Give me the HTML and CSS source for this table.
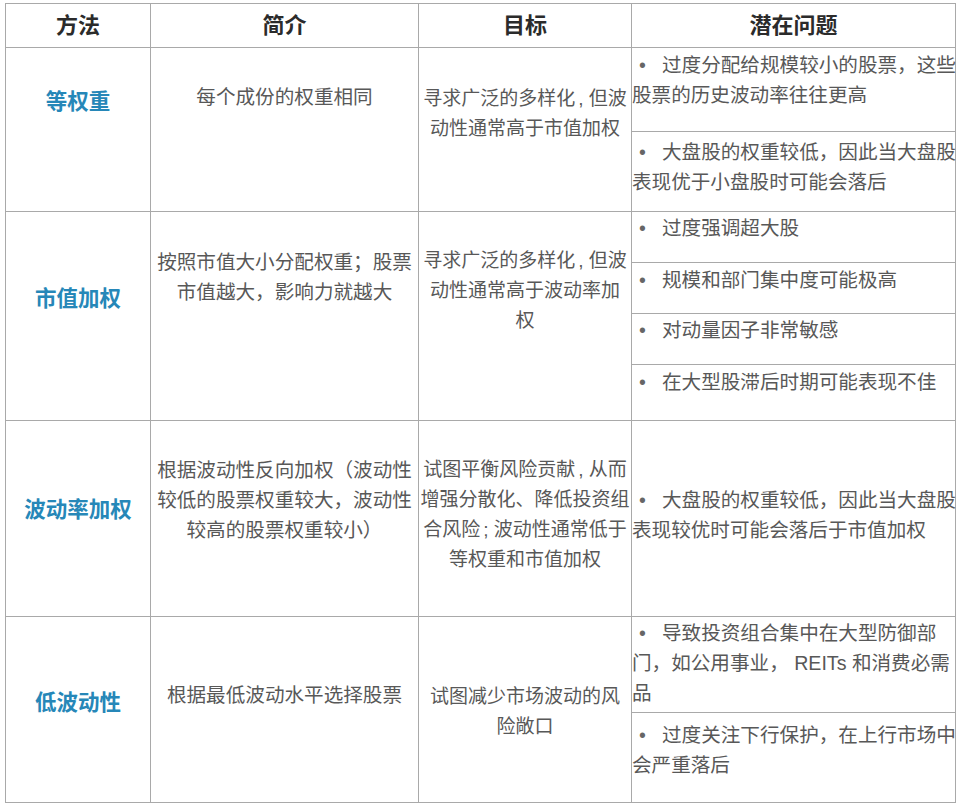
FILE: index.html
```html
<!DOCTYPE html>
<html lang="zh-CN">
<head>
<meta charset="utf-8">
<title>加权方法比较</title>
<link rel="stylesheet" href="styles.css">
</head>
<body>
<div class="page">
  <div class="grid">
    <div class="cell head">方法</div>
    <div class="cell head">简介</div>
    <div class="cell head">目标</div>
    <div class="cell head">潜在问题</div>

    <div class="cell name p39">等权重</div>
    <div class="cell desc p34">每个成份的权重相同</div>
    <div class="cell goal p36">寻求广泛的多样化<span class="pn">,</span>但波<br>动性通常高于市值加权</div>
    <div class="cell issues">
      <div class="sub h83 p2"><span class="b">•</span>过度分配给规模较小的股票，这些<br>股票的历史波动率往往更高</div>
      <div class="sub grow p5"><span class="b">•</span>大盘股的权重较低，因此当大盘股<br>表现优于小盘股时可能会落后</div>
    </div>

    <div class="cell name p72">市值加权</div>
    <div class="cell desc p35">按照市值大小分配权重；股票<br>市值越大，影响力就越大</div>
    <div class="cell goal p34">寻求广泛的多样化<span class="pn">,</span>但波<br>动性通常高于波动率加<br>权</div>
    <div class="cell issues">
      <div class="sub h50 p1"><span class="b">•</span>过度强调超大股</div>
      <div class="sub h50 p2"><span class="b">•</span>规模和部门集中度可能极高</div>
      <div class="sub h50 p1"><span class="b">•</span>对动量因子非常敏感</div>
      <div class="sub grow p2"><span class="b">•</span>在大型股滞后时期可能表现不佳</div>
    </div>

    <div class="cell name p74">波动率加权</div>
    <div class="cell desc p34">根据波动性反向加权（波动性<br>较低的股票权重较大，波动性<br>较高的股票权重较小）</div>
    <div class="cell goal p34">试图平衡风险贡献<span class="pn">,</span>从而<br>增强分散化、降低投资组<br>合风险<span class="pn">;</span>波动性通常低于<br>等权重和市值加权</div>
    <div class="cell issues">
      <div class="sub grow p64"><span class="b">•</span>大盘股的权重较低，因此当大盘股<br>表现较优时可能会落后于市值加权</div>
    </div>

    <div class="cell name p71">低波动性</div>
    <div class="cell desc p63">根据最低波动水平选择股票</div>
    <div class="cell goal p65">试图减少市场波动的风<br>险敞口</div>
    <div class="cell issues">
      <div class="sub h95 p1"><span class="b">•</span>导致投资组合集中在大型防御部<br>门，如公用事业， REITs 和消费必需<br>品</div>
      <div class="sub grow p7"><span class="b">•</span>过度关注下行保护，在上行市场中<br>会严重落后</div>
    </div>
  </div>
</div>
</body>
</html>
```

FILE: styles.css
```css
html, body {
  margin: 0;
  padding: 0;
  background: #ffffff;
}

.page {
  padding: 3px 5px 0 5px;
}

.grid {
  display: grid;
  width: 951px;
  box-sizing: border-box;
  grid-template-columns: 144px 267px 212px 323px;
  grid-template-rows: 43px 163px 208px 195px 185px;
  gap: 1px;
  padding: 1px;
  background: #a9a9a9;
  font-family: "Liberation Sans", "Noto Sans CJK SC", sans-serif;
  color: #585858;
}

.cell {
  background: #ffffff;
  box-sizing: border-box;
  font-size: 19.6px;
  line-height: 30px;
  white-space: nowrap;
  text-align: center;
}

.head {
  font-size: 22px;
  font-weight: bold;
  color: #2b2b2b;
  line-height: 43px;
}

.name {
  color: #2687b8;
  font-weight: bold;
  font-size: 21.5px;
}

.goal {
  font-size: 19px;
}

.pn {
  margin: 0 5px 0 3px;
}

.issues {
  display: flex;
  flex-direction: column;
  gap: 1px;
  background: #a9a9a9;
  text-align: left;
}

.sub {
  background: #ffffff;
  box-sizing: border-box;
  padding-left: 0;
}

.grow { flex: 1; }
.h83 { height: 83px; }
.h50 { height: 50px; }
.h95 { height: 95px; }

.b {
  display: inline-block;
  width: 30px;
  padding-left: 7px;
  box-sizing: border-box;
  color: #666666;
}

.p1 { padding-top: 1px; }
.p2 { padding-top: 2px; }
.p5 { padding-top: 5px; }
.p7 { padding-top: 7px; }
.p34 { padding-top: 34px; }
.p35 { padding-top: 35px; }
.p36 { padding-top: 36px; }
.p39 { padding-top: 39px; }
.p63 { padding-top: 63px; }
.p64 { padding-top: 64px; }
.p65 { padding-top: 65px; }
.p71 { padding-top: 71px; }
.p72 { padding-top: 72px; }
.p74 { padding-top: 74px; }
```
